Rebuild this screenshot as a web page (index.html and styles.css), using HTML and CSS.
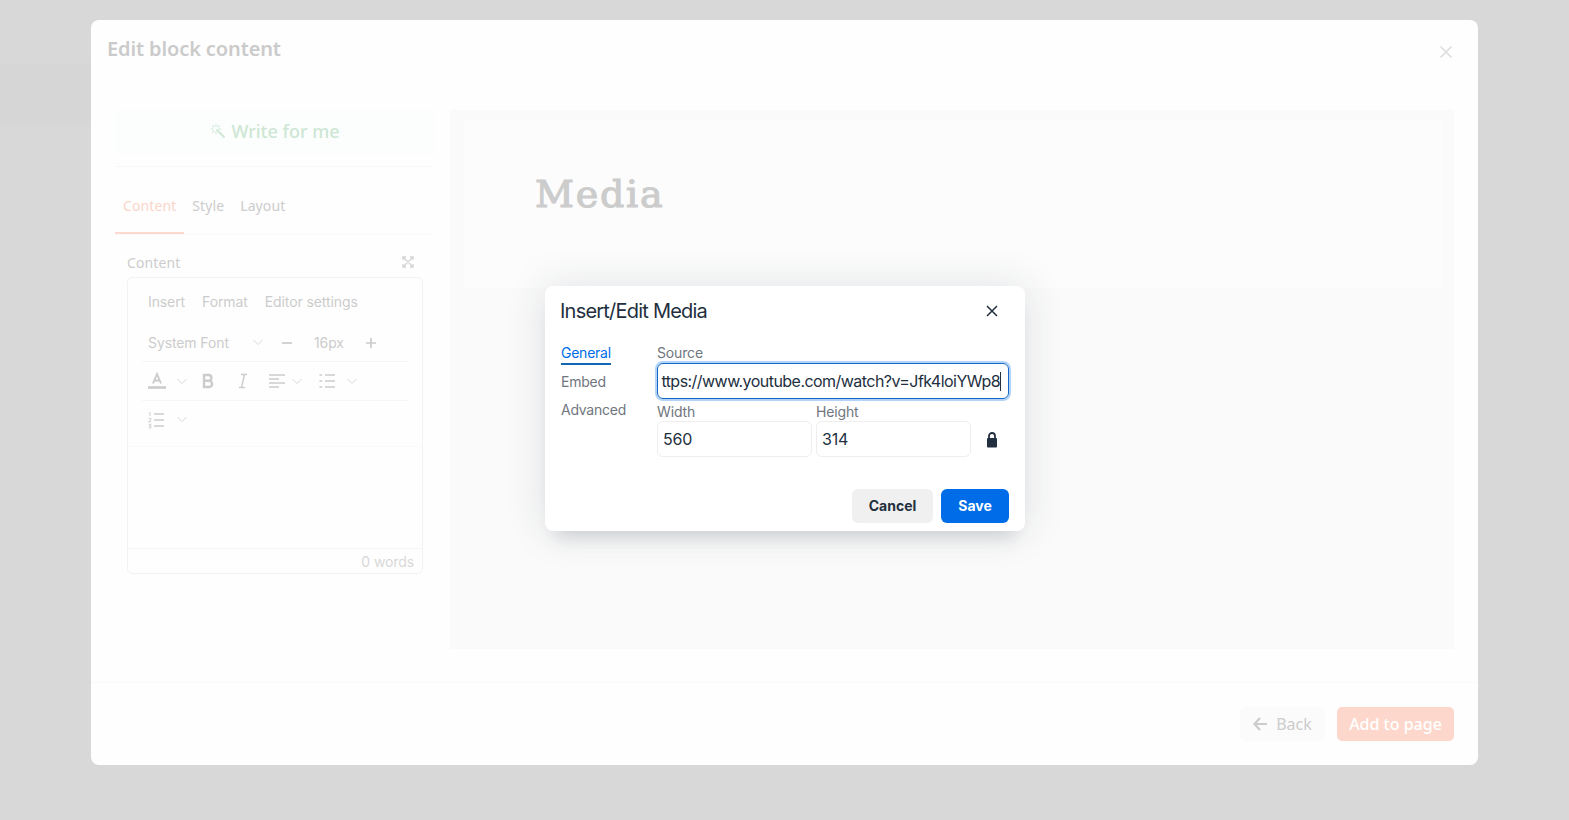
FILE: index.html
```html
<!DOCTYPE html>
<html lang="en">
<head>
    <meta charset="UTF-8">
    <meta name="viewport" content="width=device-width, initial-scale=1.0">
    <title>Edit block content</title>
    <link rel="stylesheet" href="styles.css">
</head>
<body>
    <div class="modal">
        <header class="modal-header">
            <h1>Edit block content</h1>
            <svg class="modal-close" width="14" height="14" viewBox="0 0 14 14"><path d="M1.5 1.5l11 11M12.5 1.5l-11 11"/></svg>
        </header>

        <div class="modal-body">
            <aside class="sidebar">
                <div class="write">
                    <svg width="16" height="16" viewBox="0 0 16 16"><path d="M6.5 6.5L14.5 14.5" stroke-width="1.8"/><path d="M6 1v2.5M6 8.5V11M1 6h2.500M8.500 6H11M2.500 2.500l1.700 1.700M9.500 2.500L7.800 4.200M2.500 9.500l1.700-1.700"/></svg>
                    <span>Write for me</span>
                </div>

                <nav class="tabs">
                    <a class="active">Content</a>
                    <a>Style</a>
                    <a>Layout</a>
                </nav>

                <div class="field-label">
                    <span>Content</span>
                    <svg width="12" height="12" viewBox="0 0 12 12"><path d="M1 1l10 10M11 1L1 11M1 4V1h3M8 1h3v3M1 8v3h3M8 11h3V8"/></svg>
                </div>

                <div class="editor">
                    <div class="menubar">
                        <span>Insert</span>
                        <span>Format</span>
                        <span>Editor settings</span>
                    </div>
                    <div class="toolbar font-row">
                        <span class="font-name">System Font</span>
                        <svg class="chevron" width="10" height="7" viewBox="0 0 10 7"><path d="M.5 1L5 5.5 9.500 1"/></svg>
                        <svg class="minus" width="12" height="12" viewBox="0 0 12 12"><path d="M1 6h10"/></svg>
                        <span class="size">16px</span>
                        <svg class="plus" width="12" height="12" viewBox="0 0 12 12"><path d="M1 6h10M6 1v10"/></svg>
                    </div>
                    <div class="toolbar format-row">
                        <svg class="icon color" width="18" height="18" viewBox="0 0 18 18"><path d="M0 15.500h18" stroke-width="2.600"/><path d="M5 11.500L9 2l4 9.500M6.300 8.500h5.400" stroke-width="1.900"/></svg>
                        <svg class="chevron c1" width="10" height="7" viewBox="0 0 10 7"><path d="M.5 1L5 5.500 9.500 1"/></svg>
                        <svg class="icon bold" width="12" height="16" viewBox="0 0 12 16"><path d="M2 2h4.500a2.800 2.800 0 0 1 0 5.800H2zM2 7.800h5a3.100 3.100 0 0 1 0 6.200H2z" stroke-width="2.400"/></svg>
                        <svg class="icon italic" width="10" height="16" viewBox="0 0 10 16"><path d="M3 1.500h6M1 14.500h6M6.500 1.500l-3 13" stroke-width="1.400"/></svg>
                        <svg class="icon align" width="16" height="16" viewBox="0 0 16 16"><path d="M0 2h16M0 6h10M0 10h16M0 14h10"/></svg>
                        <svg class="chevron c2" width="10" height="7" viewBox="0 0 10 7"><path d="M.5 1L5 5.500 9.500 1"/></svg>
                        <svg class="icon bullets" width="16" height="16" viewBox="0 0 16 16"><path d="M6 2h10M6 8h10M6 14h10M.5 2h2.600M.5 8h2.600M.5 14h2.600"/></svg>
                        <svg class="chevron c3" width="10" height="7" viewBox="0 0 10 7"><path d="M.5 1L5 5.500 9.500 1"/></svg>
                    </div>
                    <div class="toolbar list-row">
                        <svg class="icon numbers" width="16" height="18" viewBox="0 0 16 18"><path d="M6 3h10M6 9h10M6 15h10"/><path d="M1 2l1-.7V5M.5 7.300h2.300v1.800L.5 10.800h2.500M.5 13.300h2.300V17H.5M.8 15.100h2" stroke-width=".9"/></svg>
                        <svg class="chevron c1" width="10" height="7" viewBox="0 0 10 7"><path d="M.5 1L5 5.500 9.500 1"/></svg>
                    </div>
                    <div class="textarea"></div>
                    <div class="statusbar">0 words</div>
                </div>
            </aside>

            <main class="preview">
                <section class="block"><h2>Media</h2></section>
            </main>
        </div>

        <footer class="modal-footer">
            <button class="back">
                <svg width="15" height="14" viewBox="0 0 15 14"><path d="M7 1L1.500 7 7 13M1.500 7H14"/></svg>
                <span>Back</span>
            </button>
            <button class="add"><span>Add to page</span></button>
        </footer>
    </div>

    <div class="dialog">
        <div class="dialog-header">
            <h3>Insert/Edit Media</h3>
            <svg width="12" height="12" viewBox="0 0 12 12"><path d="M1 1l10 10M11 1L1 11"/></svg>
        </div>
        <div class="dialog-body">
            <nav class="dialog-nav">
                <a class="active">General</a>
                <a>Embed</a>
                <a>Advanced</a>
            </nav>
            <div class="form">
                <label>Source</label>
                <div class="input focused"><span class="url">ttps://www.youtube.com/watch?v=Jfk4loiYWp8</span></div>
                <div class="sizes">
                    <div class="col">
                        <label>Width</label>
                        <div class="input">560</div>
                    </div>
                    <div class="col">
                        <label>Height</label>
                        <div class="input">314</div>
                    </div>
                    <svg class="lock" width="10" height="16" viewBox="0 0 10 16"><rect y="6" width="10" height="9.500" rx="1"/><path d="M2 7V4a3 3 0 0 1 6 0v3"/></svg>
                </div>
            </div>
        </div>
        <div class="dialog-footer">
            <button class="cancel">Cancel</button>
            <button class="save">Save</button>
        </div>
    </div>
</body>
</html>
```
FILE: styles.css
```css
* {
  margin: 0;
  padding: 0;
  box-sizing: border-box;
}

body {
  height: 820px;
  padding: 20px 91px 0;
  overflow: hidden;
  font-family: "Noto Sans", sans-serif;
  color: #ccc;
  background: linear-gradient(#d8d8d8 62px, #d6d6d6 66px, #d6d6d6 122px, #d8d8d8 128px) 0 0 / 91px 100% no-repeat #d8d8d8;
}

svg {
  display: block;
  flex: none;
  fill: none;
  stroke: #ccc;
}

button {
  border: none;
  font-family: inherit;
}

/* modal */
.modal {
  width: 1387px;
  height: 745px;
  display: flex;
  flex-direction: column;
  background: #fefefe;
  border-radius: 8px;
}

.modal-header {
  height: 90px;
  padding: 14px 25px 0 16px;
  display: flex;
  justify-content: space-between;
}

.modal-header h1 {
  font-size: 20px;
  line-height: 30px;
  font-weight: 600;
  letter-spacing: -.12px;
  color: #cbcbcb;
}

.modal-close {
  margin-top: 11px;
  stroke: #ddd;
  stroke-width: 1.6;
}

.modal-body {
  height: 572px;
  display: flex;
  gap: 16px;
  padding-left: 24px;
}

.sidebar {
  width: 319px;
}

.write {
  height: 44px;
  padding: 0 0 2px 1px;
  display: flex;
  align-items: center;
  justify-content: center;
  gap: 5px;
  font-size: 18px;
  font-weight: 500;
  color: #cee6d4;
  background: #fbfefc;
}

.write svg {
  stroke: #cee6d4;
  stroke-width: 1.1;
}

.tabs {
  width: 317px;
  height: 69px;
  margin-top: 12px;
  display: flex;
  border-top: 1px solid #f8f8f8;
  border-bottom: 1px solid #f9f9f9;
}

.tabs a {
  padding: 0 8px;
  font-size: 14px;
  line-height: 77px;
  letter-spacing: .1px;
}

.tabs .active {
  height: 67px;
  color: #fcd5c9;
  border-bottom: 2px solid #fcd9cd;
}

.field-label {
  height: 42px;
  padding: 13px 20px 0 12px;
  display: flex;
  justify-content: space-between;
  font-size: 14px;
  line-height: 30px;
  letter-spacing: .1px;
}

.field-label svg {
  margin-top: 8px;
  stroke: #d4d4d4;
  stroke-width: 1.3;
}

.editor {
  width: 296px;
  height: 297px;
  margin-left: 12px;
  display: flex;
  flex-direction: column;
  border: 1px solid #f3f3f3;
  border-radius: 5px;
  font-family: Inter, sans-serif;
  font-size: 14px;
  letter-spacing: -.1px;
}

.menubar {
  height: 48px;
  display: flex;
  align-items: center;
  gap: 17px;
  padding: 0 0 2px 20px;
}

.toolbar {
  height: 39px;
  margin: 0 14px;
  padding-left: 6px;
  display: flex;
  align-items: center;
  border-bottom: 1px solid #f6f6f6;
}

.font-row {
  height: 36px;
  padding-bottom: 2px;
}

.font-name {
  width: 105px;
}

.chevron {
  stroke: #d8d8d8;
}

.minus,
.plus,
.icon {
  stroke-width: 1.7;
}

.minus {
  margin-left: 18px;
}

.size {
  width: 31px;
  margin: 0 20px 0 21px;
}

.c1 {
  margin-left: 11px;
}

.bold {
  margin-left: 15px;
}

.italic {
  margin-left: 24px;
}

.align {
  margin-left: 21px;
}

.c2 {
  margin-left: 7px;
}

.bullets {
  margin-left: 17px;
}

.c3 {
  margin-left: 12px;
}

.list-row {
  height: 46px;
  margin: 0;
  padding: 0 0 8px 20px;
  border-color: #fafafa;
}

.list-row .c1 {
  margin-left: 13px;
}

.textarea {
  flex: 1;
}

.statusbar {
  height: 25px;
  padding-right: 8px;
  border-top: 1px solid #f5f5f5;
  line-height: 26px;
  text-align: right;
  color: #d8d8d8;
}

.preview {
  width: 1004px;
  height: 539px;
  padding: 10px 12px 0 14px;
  background: #fafafa;
}

.block {
  height: 168px;
  padding: 48px 71px;
  background: #fcfcfc;
}

.block h2 {
  font-family: "DejaVu Serif", serif;
  font-size: 38px;
  line-height: 52px;
  font-weight: 400;
  letter-spacing: 1.8px;
  -webkit-text-stroke: 1.2px #ccc;
}

.modal-footer {
  height: 83px;
  padding: 24px 24px 0;
  display: flex;
  justify-content: flex-end;
  gap: 12px;
  border-top: 1px solid #f9f9f9;
}

.modal-footer button {
  height: 34px;
  display: flex;
  align-items: center;
  justify-content: center;
  gap: 8px;
  border-radius: 5px;
  font-size: 16px;
}

.back {
  width: 85px;
  color: #ccc;
  background: #fbfbfb;
}

.back svg {
  stroke-width: 2.2;
}

.add {
  width: 117px;
  font-weight: 500;
  color: #fff;
  background: #fdd7cb;
}

/* media dialog */
.dialog {
  position: absolute;
  left: 545px;
  top: 286px;
  width: 480px;
  height: 245px;
  padding: 8px 16px;
  background: #fff;
  border-radius: 8px;
  box-shadow: 0 16px 16px -10px rgba(34, 47, 62, .15), 0 0 40px 1px rgba(34, 47, 62, .12);
  font-family: Inter, sans-serif;
  font-size: 14px;
  color: #222f3e;
}

.dialog-header {
  height: 49px;
  padding: 0 11px 16px 0;
  display: flex;
  align-items: center;
  justify-content: space-between;
}

.dialog-header h3 {
  margin-left: -1px;
  font-size: 20px;
  font-weight: 400;
  letter-spacing: -.78px;
}

.dialog-header svg {
  stroke: #222f3e;
  stroke-width: 1.5;
}

.dialog-body {
  display: flex;
  height: 146px;
}

.dialog-nav {
  width: 96px;
  display: flex;
  flex-direction: column;
  align-items: flex-start;
  letter-spacing: -.25px;
}

.dialog-nav a {
  height: 20px;
  margin-bottom: 8px;
  line-height: 20px;
  color: #6f767e;
}

.dialog-nav .active {
  height: 22px;
  margin-bottom: 7px;
  color: #006ce7;
  border-bottom: 2px solid #1267b4;
}

.form {
  width: 352px;
}

label {
  display: block;
  height: 20px;
  line-height: 20px;
  letter-spacing: -.15px;
  color: #6f767e;
}

.input {
  height: 36px;
  padding: 0 5px;
  border: 1px solid #eee;
  border-radius: 6px;
  font-size: 16px;
  line-height: 34px;
  letter-spacing: -.2px;
}

.focused {
  display: flex;
  align-items: center;
  justify-content: flex-end;
  padding-right: 7px;
  border-color: #1267c8;
  box-shadow: 0 0 0 2px #b3d3f8;
}

.url {
  border-right: 1px solid #222f3e;
  line-height: 19px;
  letter-spacing: -.54px;
  white-space: nowrap;
}

.sizes {
  display: flex;
  align-items: flex-end;
  gap: 4px;
  margin-top: 2px;
}

.sizes label {
  line-height: 22px;
}

.col {
  width: 155px;
}

.lock {
  margin: 0 0 9px 12px;
  fill: #222f3e;
  stroke: none;
}

.lock path {
  fill: none;
  stroke: #222f3e;
  stroke-width: 1.8;
}

.dialog-footer {
  display: flex;
  justify-content: flex-end;
  gap: 8px;
}

.dialog-footer button {
  height: 34px;
  padding-bottom: 1px;
  border-radius: 6px;
  font-size: 14px;
  font-weight: 700;
}

.cancel {
  width: 81px;
  color: #222f3e;
  background: #f0f0f0;
}

.save {
  width: 68px;
  color: #fff;
  background: #006ce7;
}
```
